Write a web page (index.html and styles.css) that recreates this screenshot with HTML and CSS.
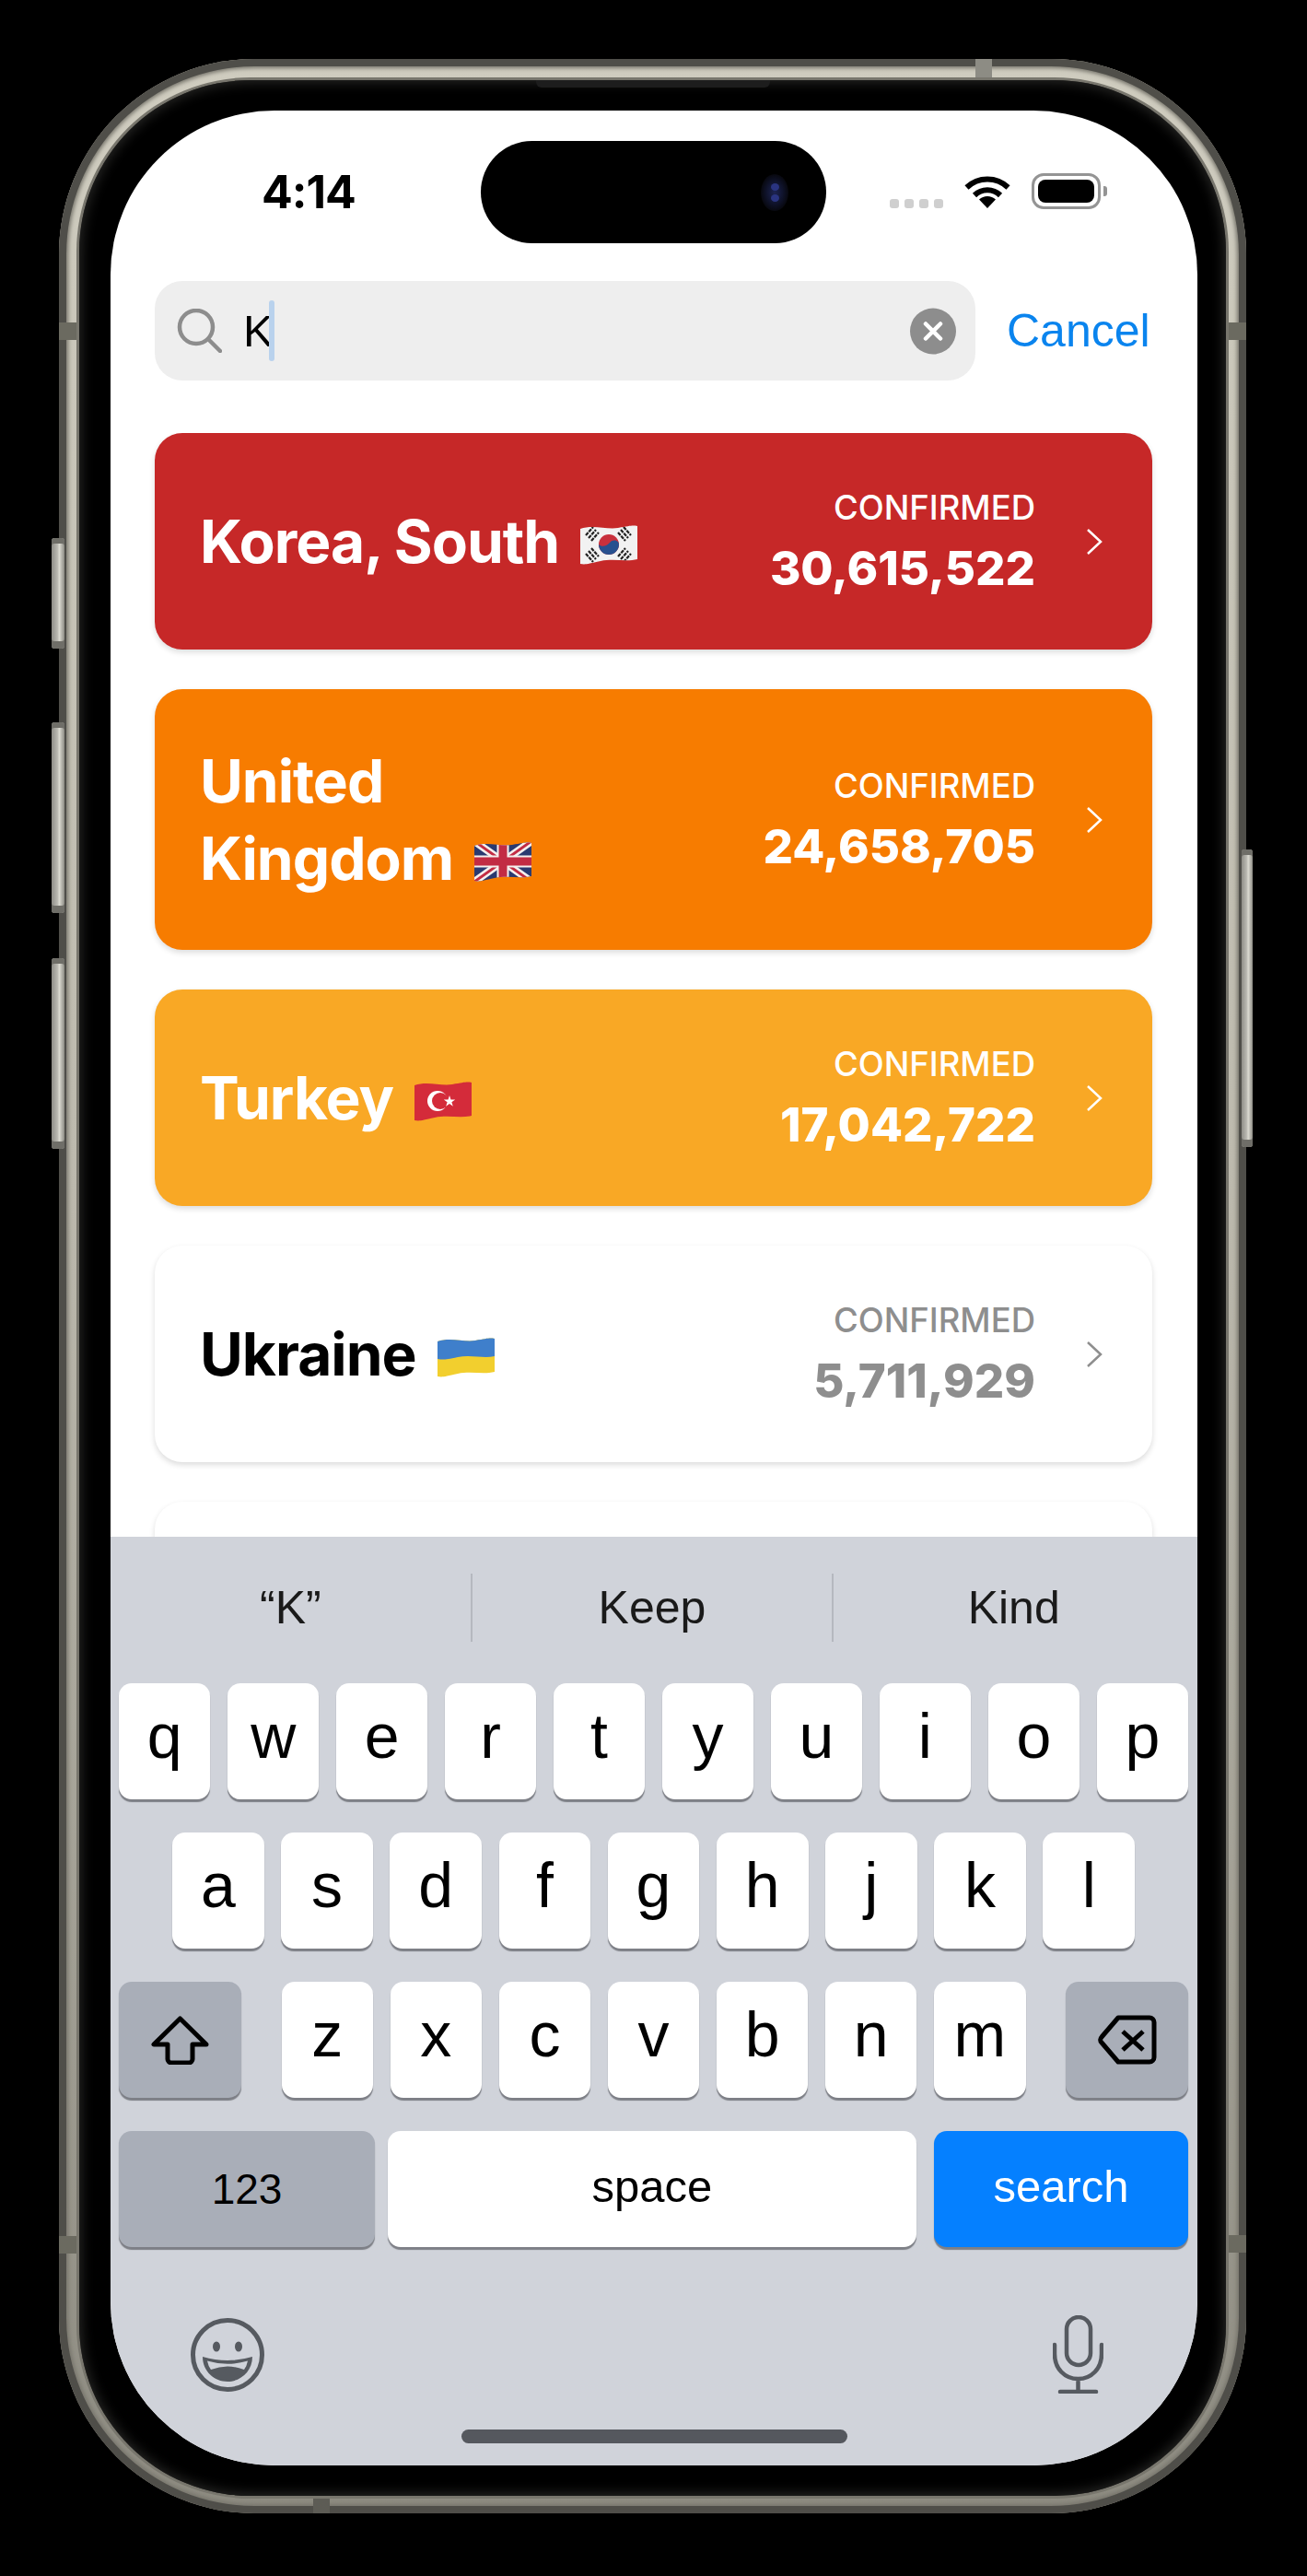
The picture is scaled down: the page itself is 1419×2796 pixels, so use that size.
FILE: index.html
```html
<!DOCTYPE html>
<html lang="en">
<head>
<meta charset="utf-8">
<title>Search countries</title>
<link rel="stylesheet" href="styles.css">
</head>
<body>
<div class="stage">
  <div class="phone">
    <span class="btn btn-mute"></span>
    <span class="btn btn-up"></span>
    <span class="btn btn-down"></span>
    <span class="btn btn-power"></span>
    <span class="band band-lt"></span>
    <span class="band band-rt"></span>
    <span class="band band-lb"></span>
    <span class="band band-rb"></span>
    <span class="band-h band-top"></span>
    <span class="band-h band-bottom"></span>
    <div class="bezel">
      <span class="speaker"></span>
      <div class="screen">
        <header class="status">
          <span class="time">4:14</span>
          <div class="island"><span class="camera"><i class="lens"></i><i class="lens"></i></span></div>
          <div class="signal"><i></i><i></i><i></i><i></i></div>
          <svg class="wifi" viewBox="0 0 50 37"><path class="wifi-arc" d="M2.5 14.5A32.5 32.5 0 0 1 47.500 14.500"/><path class="wifi-arc" d="M11 23A20 20 0 0 1 39 23"/><path d="M25 37L16 27.500A13 13 0 0 1 34 27.500Z"/></svg>
          <div class="battery"><span class="battery-fill"></span></div>
          <span class="battery-nub"></span>
        </header>

        <div class="search-row">
          <div class="search">
            <svg class="glass" viewBox="0 0 49 48"><circle cx="21" cy="20" r="18"/><path d="M34 33L47 46"/></svg>
            <span class="query">K</span><span class="caret"></span>
            <svg class="clear" viewBox="0 0 50 50"><circle class="clear-bg" cx="25" cy="25" r="25"/><path class="clear-x" d="M17 17L33 33M33 17L17 33"/></svg>
          </div>
          <span class="cancel">Cancel</span>
        </div>

        <main class="list">
          <article class="card card-red">
            <h2 class="name">Korea, South
              <svg class="flag" viewBox="0 0 62 44"><defs><clipPath id="fk"><path d="M0 5C14 0 28 6 41 4S56 1 62 2V38C50 41 36 37 22 40S6 44 0 43Z"/></clipPath></defs><g clip-path="url(#fk)"><rect width="62" height="44" fill="#f2f2f2"/><circle cx="31" cy="22" r="11" fill="#c8303c"/><path d="M20 22a11 11 0 0 0 22 0c0 -5 -7 -6 -10 -2s-9 5 -12 2Z" fill="#27508f"/><path d="M9 15L17 6M12 18L20 9M6 12L14 3M44 6L52 15M41 9L49 18M47 3L55 12M9 29L17 38M12 26L20 35M6 32L14 41M44 38L52 29M41 35L49 26M47 41L55 32" stroke="#222" stroke-width="2.200" stroke-dasharray="4 1" fill="none"/></g></svg>
            </h2>
            <div class="stat"><span class="stat-label">CONFIRMED</span><span class="stat-value">30,615,522</span></div>
            <svg class="chevron" viewBox="0 0 18 30"><path d="M2 2L16 15L2 28"/></svg>
          </article>

          <article class="card card-orange card-tall">
            <h2 class="name">United<br>Kingdom
              <svg class="flag" viewBox="0 0 62 44"><defs><clipPath id="fu"><path d="M0 5C14 0 28 6 41 4S56 1 62 2V38C50 41 36 37 22 40S6 44 0 43Z"/></clipPath></defs><g clip-path="url(#fu)"><rect width="62" height="44" fill="#2a3a70"/><path d="M0 0L62 44M62 0L0 44" stroke="#f4f0ee" stroke-width="8"/><path d="M0 0L62 44M62 0L0 44" stroke="#c22c44" stroke-width="3"/><path d="M31 0V44M0 22H62" stroke="#f4f0ee" stroke-width="13"/><path d="M31 0V44M0 22H62" stroke="#c22c44" stroke-width="9"/></g></svg>
            </h2>
            <div class="stat"><span class="stat-label">CONFIRMED</span><span class="stat-value">24,658,705</span></div>
            <svg class="chevron" viewBox="0 0 18 30"><path d="M2 2L16 15L2 28"/></svg>
          </article>

          <article class="card card-amber">
            <h2 class="name">Turkey
              <svg class="flag" viewBox="0 0 62 44"><defs><clipPath id="ft"><path d="M0 5C14 0 28 6 41 4S56 1 62 2V38C50 41 36 37 22 40S6 44 0 43Z"/></clipPath></defs><g clip-path="url(#ft)"><rect width="62" height="44" fill="#d42b3a"/><circle cx="25" cy="22" r="11" fill="#fff"/><circle cx="28" cy="22" r="9" fill="#d42b3a"/><path d="M38 16l1.500 4.500 4.700 0-3.800 2.800 1.400 4.500-3.800-2.800-3.800 2.800 1.400-4.500-3.800-2.800 4.700 0Z" fill="#fff"/></g></svg>
            </h2>
            <div class="stat"><span class="stat-label">CONFIRMED</span><span class="stat-value">17,042,722</span></div>
            <svg class="chevron" viewBox="0 0 18 30"><path d="M2 2L16 15L2 28"/></svg>
          </article>

          <article class="card card-plain">
            <h2 class="name">Ukraine
              <svg class="flag" viewBox="0 0 62 44"><defs><clipPath id="fa"><path d="M0 5C14 0 28 6 41 4S56 1 62 2V38C50 41 36 37 22 40S6 44 0 43Z"/></clipPath></defs><g clip-path="url(#fa)"><rect width="62" height="44" fill="#f2cf2e"/><path d="M0 0H62V21C50 24 36 19 22 22S6 25 0 24Z" fill="#3f7fcb"/></g></svg>
            </h2>
            <div class="stat"><span class="stat-label">CONFIRMED</span><span class="stat-value">5,711,929</span></div>
            <svg class="chevron" viewBox="0 0 18 30"><path d="M2 2L16 15L2 28"/></svg>
          </article>

          <article class="card card-plain"></article>
        </main>

        <section class="keyboard">
          <div class="suggest">
            <span class="sug">“K”</span>
            <span class="sug sug-mid">Keep</span>
            <span class="sug">Kind</span>
          </div>
          <div class="rows">
            <div class="row">
              <span class="key">q</span><span class="key">w</span><span class="key">e</span><span class="key">r</span><span class="key">t</span><span class="key">y</span><span class="key">u</span><span class="key">i</span><span class="key">o</span><span class="key">p</span>
            </div>
            <div class="row row-2">
              <span class="key">a</span><span class="key">s</span><span class="key">d</span><span class="key">f</span><span class="key">g</span><span class="key">h</span><span class="key">j</span><span class="key">k</span><span class="key">l</span>
            </div>
            <div class="row">
              <span class="key key-fn key-side key-side-l"><svg class="shift" viewBox="0 0 63 53"><path d="M31.500 3L3 31H18V47a4 4 0 0 0 4 4H41a4 4 0 0 0 4-4V31H60Z"/></svg></span>
              <span class="key">z</span><span class="key">x</span><span class="key">c</span><span class="key">v</span><span class="key">b</span><span class="key">n</span><span class="key">m</span>
              <span class="key key-fn key-side key-side-r"><svg class="backspace" viewBox="0 0 64 54"><path d="M22 3H56a5 5 0 0 1 5 5V46a5 5 0 0 1-5 5H22L4 30a4 4 0 0 1 0-6Z"/><path d="M27 18L49 38M49 18L27 38"/></svg></span>
            </div>
            <div class="row row-4">
              <span class="key key-fn key-num">123</span>
              <span class="key key-word key-space">space</span>
              <span class="key key-word key-search">search</span>
            </div>
          </div>
          <div class="kb-tools">
            <svg class="emoji" viewBox="0 0 80 80"><circle class="emoji-face" cx="40" cy="40" r="37.500"/><ellipse class="emoji-fill" cx="28" cy="31" rx="4" ry="5.500"/><ellipse class="emoji-fill" cx="52" cy="31" rx="4" ry="5.500"/><path class="emoji-fill" d="M13 42Q40 50 67 42C67 58 54 69 40 69C26 69 13 58 13 42Z"/><path class="emoji-band" d="M18 46.500Q40 53 62 46.500Q61 52 58 56Q40 49 22 56Q19 52 18 46.500Z"/></svg>
            <svg class="mic" viewBox="0 0 55 85"><rect x="15" y="2" width="26" height="52" rx="13"/><path d="M2 32V42C2 58 13 69 27.500 69S53 58 53 42V32M27.500 69V82M8 83H47"/></svg>
          </div>
          <div class="home-bar"></div>
        </section>
      </div>
    </div>
  </div>
</div>
</body>
</html>
```

FILE: styles.css
```css
* { box-sizing: border-box; }
html, body { margin: 0; background: #000; }
.stage { padding: 64px 66px 68px 64px; font-family: "Inter", "Liberation Sans", sans-serif; }

/* Device */
.phone {
  position: relative;
  width: 1289px;
  height: 2664px;
  padding: 23px 22px 19px 22px;
  border-radius: 212px;
  background: linear-gradient(180deg, #cfccbf 0%, #bdbaae 45%, #8d8b81 100%);
  box-shadow: inset 0 0 0 8px #4f4e49, inset 0 0 4px 10px #77756c;
}
.bezel {
  position: relative;
  height: 100%;
  padding: 33px 31px 33px 34px;
  border-radius: 186px;
  background: #000;
  box-shadow: 0 0 0 3px #78766d, inset 0 0 14px 2px #2a2a28;
}
.speaker {
  position: absolute;
  top: 0;
  left: 496px;
  width: 254px;
  height: 8px;
  border-radius: 0 0 6px 6px;
  background: #1d1d1d;
}
.btn {
  position: absolute;
  width: 14px;
  border-radius: 3px;
  background: linear-gradient(90deg, #8f8e88 0%, #b9b8b1 45%, #dcdbd2 60%, #8c8b84 100%);
  box-shadow: inset 0 6px 0 #6f6e68, inset 0 -8px 0 #6f6e68;
}
.btn-mute { left: -8px; top: 520px; height: 120px; }
.btn-up { left: -8px; top: 720px; height: 207px; }
.btn-down { left: -8px; top: 976px; height: 207px; }
.btn-power { right: -7px; top: 858px; height: 323px; width: 12px; }
.band { position: absolute; width: 22px; height: 19px; background: #6b6a60; }
.band-lt { left: 0; top: 286px; }
.band-rt { right: 0; top: 286px; }
.band-lb { left: 0; top: 2363px; }
.band-rb { right: 0; top: 2362px; }
.band-h { position: absolute; width: 18px; height: 22px; background: #5d5c55; }
.band-top { top: 0; left: 995px; background: #8d8c84; }
.band-bottom { bottom: 0; left: 276px; }

.screen {
  display: flex;
  flex-direction: column;
  width: 1180px;
  height: 2556px;
  overflow: hidden;
  border-radius: 178px;
  background: #fff;
}

/* Status bar */
.status {
  position: relative;
  display: flex;
  align-items: flex-start;
  flex: none;
  height: 144px;
  padding: 33px 0 0 164px;
}
.time {
  width: 238px;
  margin-top: 30px;
  font-size: 50px;
  line-height: 50px;
  font-weight: 700;
  color: #000;
  letter-spacing: -1px;
}
.island {
  position: relative;
  width: 375px;
  height: 111px;
  border-radius: 56px;
  background: #000;
}
.camera {
  position: absolute;
  left: 304px;
  top: 36px;
  display: flex;
  flex-direction: column;
  align-items: center;
  justify-content: center;
  gap: 4px;
  width: 30px;
  height: 40px;
  border-radius: 50%;
  background: radial-gradient(ellipse at center, #1d2452 0%, #10142e 40%, #06060a 75%, #000 100%);
}
.lens { width: 9px; height: 8px; border-radius: 50%; background: #2a3480; }
.signal { display: flex; gap: 6px; margin: 63px 0 0 69px; }
.signal i { width: 10px; height: 10px; border-radius: 3px; background: #cfcfcf; }
.wifi { width: 50px; height: 37px; margin: 36px 0 0 23px; fill: #000; }
.wifi-arc { fill: none; stroke: #000; stroke-width: 6; }
.battery {
  width: 75px;
  height: 39px;
  margin: 35px 0 0 23px;
  padding: 4px;
  border: 3px solid #949494;
  border-radius: 13px;
  background: #fff;
}
.battery-fill { display: block; width: 100%; height: 100%; border-radius: 8px; background: #000; }
.battery-nub {
  width: 4px;
  height: 11px;
  margin: 49px 0 0 3px;
  border-radius: 0 3px 3px 0;
  background: #949494;
}

/* Search */
.search-row {
  display: flex;
  align-items: center;
  flex: none;
  gap: 34px;
  margin-top: 41px;
  padding-left: 48px;
}
.search {
  display: flex;
  align-items: center;
  width: 891px;
  height: 108px;
  padding: 0 21px 0 24px;
  border-radius: 30px;
  background: #eeeeee;
}
.glass { width: 49px; height: 48px; fill: none; stroke: #8d8d8d; stroke-width: 4.500px; stroke-linecap: round; }
.query { margin-left: 23px; font-family: "Liberation Sans", sans-serif; font-size: 49px; line-height: 60px; color: #000; }
.caret { width: 6px; height: 66px; margin-left: -5px; border-radius: 3px; background: #b9d2ed; }
.clear { width: 50px; height: 51px; margin-left: auto; }
.clear-bg { fill: #8d8d8d; }
.clear-x { fill: none; stroke: #fff; stroke-width: 4.500px; stroke-linecap: round; }
.cancel { font-family: "Liberation Sans", sans-serif; font-size: 50px; line-height: 60px; color: #0a84ee; }

/* Cards */
.list {
  display: flex;
  flex-direction: column;
  flex: 1;
  gap: 43px;
  min-height: 0;
  margin-top: 57px;
  padding: 0 49px 0 48px;
  overflow: hidden;
}
.card {
  display: flex;
  align-items: center;
  flex: none;
  height: 235px;
  padding-left: 49px;
  border-radius: 30px;
  color: #fff;
  box-shadow: 0 3px 6px rgba(0, 0, 0, 0.14);
}
.card-tall { height: 283px; }
.card-red { background: #c62828; }
.card-orange { background: #f77c00; }
.card-amber { background: #f9a825; }
.card-plain { background: #fff; color: #000; box-shadow: 0 3px 6px rgba(0, 0, 0, 0.14); }
.name {
  flex: 1;
  margin: 0;
  font-size: 64px;
  line-height: 84px;
  font-weight: 700;
  letter-spacing: -1px;
}
.flag { display: inline-block; width: 62px; height: 44px; margin-left: 9px; vertical-align: -2px; }
.stat { display: flex; flex-direction: column; align-items: flex-end; }
.stat-label { font-size: 36.500px; line-height: 46px; font-weight: 500; }
.stat-value { margin-top: 13px; font-size: 51px; line-height: 60px; font-weight: 800; }
.card-plain .stat { color: #8e8e8e; }
.chevron { width: 18px; height: 30px; margin: 0 54px 0 55px; fill: none; stroke: #fff; stroke-width: 2.500px; }
.card-plain .chevron { stroke: #8e8e8e; }

/* Keyboard */
.keyboard {
  flex: none;
  height: 1008px;
  background: #d0d3da;
  font-family: "Liberation Sans", sans-serif;
  color: #000;
}
.suggest { display: flex; align-items: center; height: 159px; padding-right: 4px; }
.sug {
  flex: 1;
  height: 74px;
  margin-top: -6px;
  font-size: 50px;
  line-height: 74px;
  text-align: center;
  color: #1a1a1a;
}
.sug-mid { border-left: 2px solid #b5b8bf; border-right: 2px solid #b5b8bf; }
.rows { display: flex; flex-direction: column; gap: 36px; padding: 0 10px 0 9px; }
.row { display: flex; gap: 18.500px; height: 126px; }
.row-2 { padding: 0 58px; }
.row-4 { gap: 14px; }
.key {
  display: flex;
  align-items: center;
  justify-content: center;
  flex: 1;
  height: 126px;
  padding-bottom: 12px;
  border-radius: 14px;
  background: #fff;
  font-size: 68px;
  line-height: 1;
  box-shadow: 0 3px 1px rgba(70, 72, 78, 0.6);
}
.key-fn { background: #a9aeb8; }
.key-side { flex: none; width: 133px; padding-bottom: 0; }
.key-side-l { margin-right: 25px; }
.key-side-r { margin-left: 25px; }
.key-num { flex: none; width: 278px; font-size: 46px; padding-bottom: 0; }
.key-word { font-size: 49px; padding-bottom: 6px; }
.key-space { flex: 1; }
.key-search { flex: none; width: 276px; margin-left: 5px; background: #0580ff; color: #fff; }
.shift { width: 63px; height: 53px; fill: none; stroke: #000; stroke-width: 5px; stroke-linejoin: round; }
.backspace { width: 64px; height: 54px; fill: none; stroke: #000; stroke-width: 5px; stroke-linejoin: round; }
.kb-tools { display: flex; justify-content: space-between; align-items: center; margin-top: 74px; padding: 0 102px 0 87px; }
.emoji { width: 80px; height: 80px; }
.emoji-face { fill: none; stroke: #565a60; stroke-width: 5px; }
.emoji-fill { fill: #565a60; }
.emoji-band { fill: #d0d3da; }
.mic { width: 55px; height: 85px; fill: none; stroke: #565a60; stroke-width: 4.500px; stroke-linecap: round; }
.home-bar { width: 419px; height: 15px; margin: 39px auto 0; border-radius: 8px; background: #55585e; }
```
